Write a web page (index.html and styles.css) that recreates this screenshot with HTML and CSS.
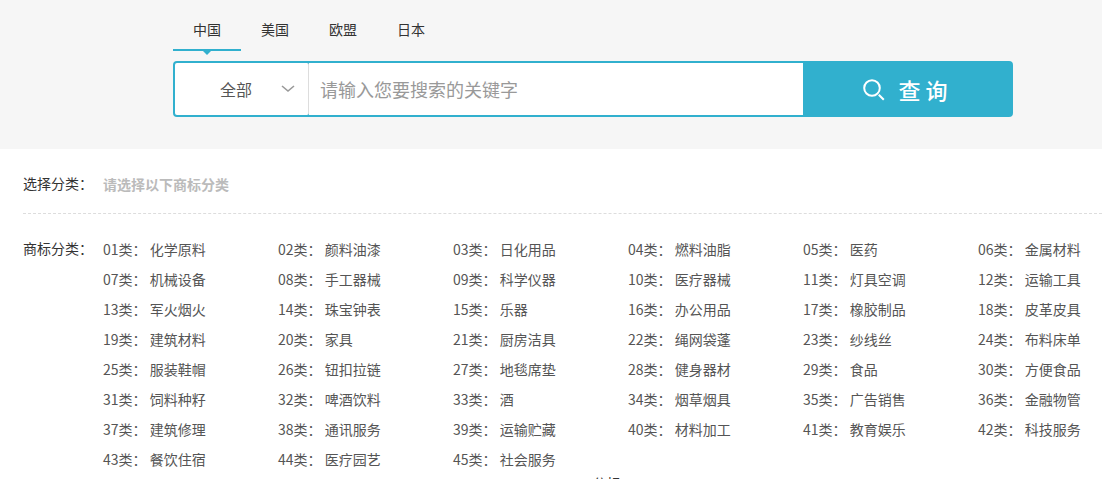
FILE: index.html
```html
<!DOCTYPE html>
<html lang="zh-CN">
<head>
<meta charset="utf-8">
<title>商标查询</title>
<link rel="stylesheet" href="styles.css">
</head>
<body>
<header class="hero">
  <nav class="tabs">
    <a class="tab tab-active" href="#cn">中国</a>
    <a class="tab" href="#us">美国</a>
    <a class="tab" href="#eu">欧盟</a>
    <a class="tab" href="#jp">日本</a>
  </nav>
  <form class="search">
    <div class="scope">
      <select class="scope-select" aria-label="搜索范围"><option>全部</option></select>
      <svg class="scope-arrow" width="14" height="8" viewBox="0 0 14 8" fill="none" stroke="#999" stroke-width="1.6"><path d="M1 1l6 5L13 1"/></svg>
    </div>
    <input class="keyword" type="text" aria-label="关键字" placeholder="请输入您要搜索的关键字">
    <button class="submit" type="button">
      <svg class="submit-icon" width="22" height="22" viewBox="0 0 22 22" fill="none" stroke="#fff" stroke-width="2"><circle cx="9" cy="9" r="7.8"/><path d="M15.8 15.8l5 5"/></svg>
      <span>查 询</span>
    </button>
  </form>
</header>
<main class="filters">
  <section class="row chosen">
    <h2 class="label">选择分类：</h2>
    <p class="hint">请选择以下商标分类</p>
  </section>
  <section class="row">
    <h2 class="label">商标分类：</h2>
    <div class="classes">
      <a href="#c01">01类： 化学原料</a><a href="#c02">02类： 颜料油漆</a><a href="#c03">03类： 日化用品</a><a href="#c04">04类： 燃料油脂</a><a href="#c05">05类： 医药</a><a href="#c06">06类： 金属材料</a>
      <a href="#c07">07类： 机械设备</a><a href="#c08">08类： 手工器械</a><a href="#c09">09类： 科学仪器</a><a href="#c10">10类： 医疗器械</a><a href="#c11">11类： 灯具空调</a><a href="#c12">12类： 运输工具</a>
      <a href="#c13">13类： 军火烟火</a><a href="#c14">14类： 珠宝钟表</a><a href="#c15">15类： 乐器</a><a href="#c16">16类： 办公用品</a><a href="#c17">17类： 橡胶制品</a><a href="#c18">18类： 皮革皮具</a>
      <a href="#c19">19类： 建筑材料</a><a href="#c20">20类： 家具</a><a href="#c21">21类： 厨房洁具</a><a href="#c22">22类： 绳网袋蓬</a><a href="#c23">23类： 纱线丝</a><a href="#c24">24类： 布料床单</a>
      <a href="#c25">25类： 服装鞋帽</a><a href="#c26">26类： 钮扣拉链</a><a href="#c27">27类： 地毯席垫</a><a href="#c28">28类： 健身器材</a><a href="#c29">29类： 食品</a><a href="#c30">30类： 方便食品</a>
      <a href="#c31">31类： 饲料种籽</a><a href="#c32">32类： 啤酒饮料</a><a href="#c33">33类： 酒</a><a href="#c34">34类： 烟草烟具</a><a href="#c35">35类： 广告销售</a><a href="#c36">36类： 金融物管</a>
      <a href="#c37">37类： 建筑修理</a><a href="#c38">38类： 通讯服务</a><a href="#c39">39类： 运输贮藏</a><a href="#c40">40类： 材料加工</a><a href="#c41">41类： 教育娱乐</a><a href="#c42">42类： 科技服务</a>
      <a href="#c43">43类： 餐饮住宿</a><a href="#c44">44类： 医疗园艺</a><a href="#c45">45类： 社会服务</a>
    </div>
  </section>
  <p class="more">分标</p>
</main>
</body>
</html>
```
FILE: styles.css
```css
* { box-sizing: border-box; }
body {
  margin: 0;
  height: 100vh;
  overflow: hidden;
  background: #fff;
  color: #333;
  font-family: "Noto Sans CJK SC", sans-serif;
  font-size: 14px;
}
a { color: inherit; text-decoration: none; }
h2, p { margin: 0; font-size: 14px; font-weight: 400; }

.hero { padding: 9px 89px 32px 173px; background: #f6f6f6; }
.tabs { display: flex; margin-bottom: 10px; }
.tab {
  position: relative;
  padding: 0 20px;
  line-height: 40px;
  border-bottom: 2px solid transparent;
}
.tab-active { border-color: #31b0ce; }
.tab-active::after {
  content: "";
  position: absolute;
  top: 100%;
  left: 50%;
  margin-left: -6px;
  border: 6px solid transparent;
  border-top-color: #31b0ce;
}

.search {
  display: flex;
  height: 56px;
  border: 2px solid #31b0ce;
  border-radius: 4px;
  background: #31b0ce;
}
.scope {
  position: relative;
  display: flex;
  width: 134px;
  background: #fff;
  border-right: 1px solid #ddd;
  border-radius: 2px;
}
.scope-select {
  width: 100%;
  padding: 0 0 0 45px;
  border: 0;
  background: transparent;
  appearance: none;
  color: #555;
  font: 16px "Noto Sans CJK SC", sans-serif;
}
.scope-arrow { position: absolute; right: 13px; top: 22px; }
.keyword {
  flex: 1;
  min-width: 0;
  padding: 0 11px;
  border: 0;
  background: #fff;
  color: #333;
  font: 18px "Noto Sans CJK SC", sans-serif;
}
.keyword::placeholder { color: #999; opacity: 1; }
.submit {
  display: flex;
  align-items: center;
  justify-content: center;
  gap: 14px;
  width: 208px;
  padding: 0 4px 0 0;
  border: 0;
  background: #31b0ce;
  color: #fff;
  font: 500 22px "Noto Sans CJK SC", sans-serif;
}
.submit-icon { margin-top: 2px; }

.filters { padding-left: 23px; }
.row { display: flex; }
.chosen {
  padding: 20px 0 14px;
  margin-bottom: 20px;
  border-bottom: 1px dashed #ddd;
}
.label { flex: 0 0 80px; line-height: 28px; }
.hint { line-height: 30px; color: #bbb; font-weight: 700; }
.classes {
  flex: 1;
  display: grid;
  grid-template-columns: repeat(6, minmax(175px, 1fr));
  line-height: 30px;
  color: #555;
}
.more { padding-left: 88px; line-height: 18px; text-align: center; }
```
